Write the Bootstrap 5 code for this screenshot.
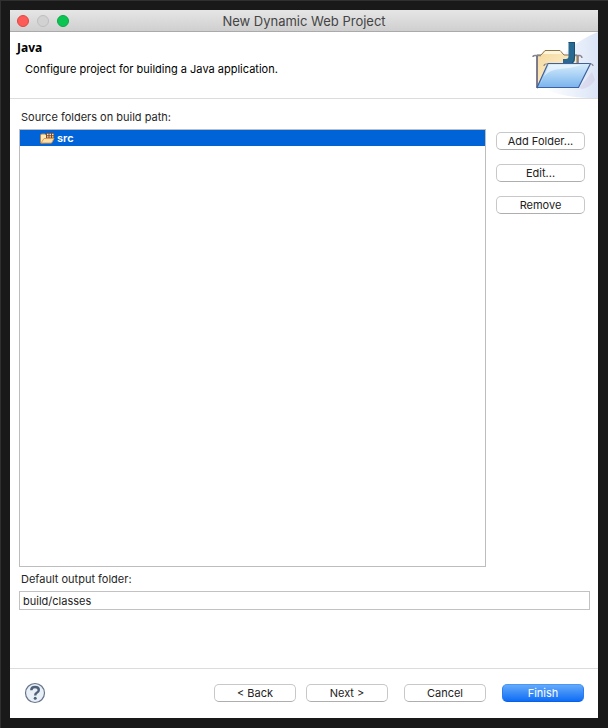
<!DOCTYPE html>
<html lang="en">
<head>
<meta charset="utf-8">
<meta name="viewport" content="width=device-width, initial-scale=1">
<title>New Dynamic Web Project</title>
<link href="https://cdn.jsdelivr.net/npm/bootstrap@5.3.0/dist/css/bootstrap.min.css" rel="stylesheet">
<style>
body { background: #191919; color: #262626; font: 11px/16px Inter, "Liberation Sans", sans-serif; padding: 10px; box-shadow: inset 1px 1px 0 #303030; }
.titlebar { height: 22px; background: linear-gradient(#e6e6e6, #cfcfcf); border-bottom: 1px solid #aaa; border-radius: 1px 1px 0 0; padding: 0 7px; }
.titlebar h1 { font-size: 13px; line-height: 22px; font-weight: 400; color: #444; }
.light { width: 12px; height: 12px; border-radius: 50%; border: 1px solid #bebebe; background: #d2d2d2; padding: 0; }
.light-close { background: #fc5b57; border-color: #df4744; }
.light-zoom { background: #0bc552; border-color: #0aa846; }
.lights { width: 60px; gap: 8px; }
.banner { height: 67px; border-bottom: 1px solid #dcdcdc; color: #000; }
.banner h2 { font: bold 12px/16px "Noto Sans", sans-serif; padding: 8px 0 0 7px; }
.banner p { padding: 5px 0 0 15px; }
.content-area { padding: 10px 8px 0 9px; }
.field-label { padding-left: 2px; line-height: 16px; }
.source-list { border: 1px solid #bdbdbd; margin-top: 4px; }
.source-list .source-item { height: 16px; background: #0064d8; color: #fff; font-weight: 600; padding: 0 20px; gap: 2px; }
.side-buttons { width: 89px; gap: 14px; padding-top: 7px; margin: 0 5px 0 10px; }
.push { --bs-btn-padding-x: 4px; --bs-btn-padding-y: 0; --bs-btn-font-size: 11px; --bs-btn-line-height: 16px; --bs-btn-border-radius: 5px; --bs-btn-border-color: #c8c8c8; --bs-btn-bg: #fff; --bs-btn-color: #222; border-bottom-color: #aeaeae; }
.push-default { background: linear-gradient(#69aefa, #0a69f5) border-box; color: #fff; border-color: #4a97f5 #2a7cf0 #0861e4; }
.wizard-buttons .push { width: 82px; }
.output-input { border: 1px solid #c2c2c2; border-radius: 0; font-size: 11px; line-height: 16px; min-height: 0; padding: 1px 3px 0; color: #222; margin-top: 4px; }
.wizard-footer { height: 50px; border-top: 1px solid #dcdcdc; padding: 0 14px 2px; margin-top: 58px; }
.wizard-buttons { gap: 10px; }
.gap-group { margin-left: 6px; }
</style>
<script src="https://cdn.jsdelivr.net/npm/bootstrap@5.3.0/dist/js/bootstrap.bundle.min.js" defer></script>
</head>
<body class="min-vh-100 d-flex">
<main class="bg-white flex-grow-1 d-flex flex-column">
  <header class="titlebar d-flex align-items-center">
    <div class="lights d-flex">
      <button type="button" class="light light-close" aria-label="Close"></button>
      <button type="button" class="light" aria-label="Minimize" disabled></button>
      <button type="button" class="light light-zoom" aria-label="Zoom"></button>
    </div>
    <h1 class="flex-grow-1 text-center m-0">New Dynamic Web Project</h1>
    <div class="lights"></div>
  </header>
  <section class="banner d-flex justify-content-between">
    <div>
      <h2 class="m-0">Java</h2>
      <p class="m-0">Configure project for building a Java application.</p>
    </div>
    <svg width="75" height="66" viewBox="0 0 75 66" aria-hidden="true">
      <defs>
        <linearGradient id="sky" x1="0" x2="1"><stop offset="0" stop-color="#fff"/><stop offset="1" stop-color="#dbe5f7"/></linearGradient>
        <linearGradient id="tan" x1="0" x2="1" y2="1"><stop offset="0" stop-color="#f5d9a0"/><stop offset="1" stop-color="#fff6d8"/></linearGradient>
        <linearGradient id="front" x1="0" y1="0" x2="0" y2="1"><stop offset="0" stop-color="#d7edfb"/><stop offset="1" stop-color="#79b4ee"/></linearGradient>
      </defs>
      <path d="M75 0C57 7 43 18 34 31L22 58Q48 67 75 66Z" fill="url(#sky)"/>
      <path d="M56 56 69 40 72 48Q67 56 59 57Z" fill="#c9bddb" opacity=".35"/>
      <path d="M14 56V23H18L22 18.500H37L41 23H54V43Z" fill="url(#tan)" stroke="#8d754b"/>
      <path d="M20 22 23 19H37L39 22Z" fill="#fff5da"/>
      <path d="M10 25Q10 23.500 12 23.500H18M49 23.500H57Q59 24 59 26" fill="none" stroke="#85858f" stroke-width="1.500"/>
      <path d="M14 55V24" stroke="#4e5787" stroke-width="1.200"/>
      <path d="M55 24V33" stroke="#8d7267" stroke-width="1.500"/>
      <path d="M45.500 10.500H52V26Q52 32 47 32H40V27H43Q45.500 27 45.500 24Z" fill="#286991"/>
      <path d="M45.500 10.500H52M51.500 11V25Q51.500 29 49 31" fill="none" stroke="#174f75"/>
      <path d="M14 55.500 25 31.500H67.500L55.500 55.500Z" fill="url(#front)" stroke="#3f5f9d" stroke-width="1.200"/>
      <path d="M17 53Q21 38 37 37Q49 36 59 33H26Z" fill="#fff" opacity=".5"/>
      <path d="M21 34Q21 32 23 32H25M66 32H68Q70 32 70 34" fill="none" stroke="#85858f" stroke-width="1.200"/>
    </svg>
  </section>
  <section class="content-area flex-grow-1 d-flex flex-column">
    <div class="field-label" id="sources-label">Source folders on build path:</div>
    <div class="flex-grow-1 d-flex">
      <div class="source-list flex-grow-1" role="listbox" aria-labelledby="sources-label">
        <div class="source-item d-flex align-items-center" role="option" aria-selected="true">
          <svg width="15" height="14" viewBox="0 0 15 14" aria-hidden="true">
            <path d="M.5 12V4L1.500 3H5L6 4H12V11Z" fill="#ffe9b8" stroke="#b98446"/>
            <rect x="6" y="2" width="8" height="5" fill="#7c4a2c"/>
            <path d="M7 3.500H8.500M9.500 3.500H11M12 3.500H13.500M7 5.800H8.500M9.500 5.800H11M12 5.800H13.500" stroke="#ffe2b4" stroke-width="1.300"/>
            <path d="M1 12 4 7.500H14L11.500 12Z" fill="#ffdfa4" stroke="#d39c5c"/>
          </svg>
          <span>src</span>
        </div>
      </div>
      <div class="side-buttons d-flex flex-column flex-shrink-0">
        <button type="button" class="btn push">Add Folder...</button>
        <button type="button" class="btn push">Edit...</button>
        <button type="button" class="btn push">Remove</button>
      </div>
    </div>
    <label class="field-label mt-1" for="output-folder">Default output folder:</label>
    <input class="form-control output-input" type="text" id="output-folder" value="build/classes">
  </section>
  <footer class="wizard-footer d-flex align-items-center justify-content-between">
    <button type="button" class="btn p-0 border-0 d-flex" aria-label="Help">
      <svg width="22" height="22" viewBox="0 0 22 22" aria-hidden="true">
        <circle cx="11" cy="11" r="9.500" fill="#e9eff6" stroke="#66758a" stroke-width="1.200"/>
        <path d="M7.300 8.200Q7.300 5 11 5Q14.800 5 14.800 8Q14.800 9.700 12.800 10.800Q11.200 11.700 11.200 13.500" fill="none" stroke="#4f6079" stroke-width="2.400"/>
        <circle cx="11.200" cy="16.300" r="1.500" fill="#4f6079"/>
      </svg>
    </button>
    <div class="wizard-buttons d-flex">
      <button type="button" class="btn push">&lt; Back</button>
      <button type="button" class="btn push">Next &gt;</button>
      <button type="button" class="btn push gap-group">Cancel</button>
      <button type="submit" class="btn push push-default gap-group">Finish</button>
    </div>
  </footer>
</main>
</body>
</html>
